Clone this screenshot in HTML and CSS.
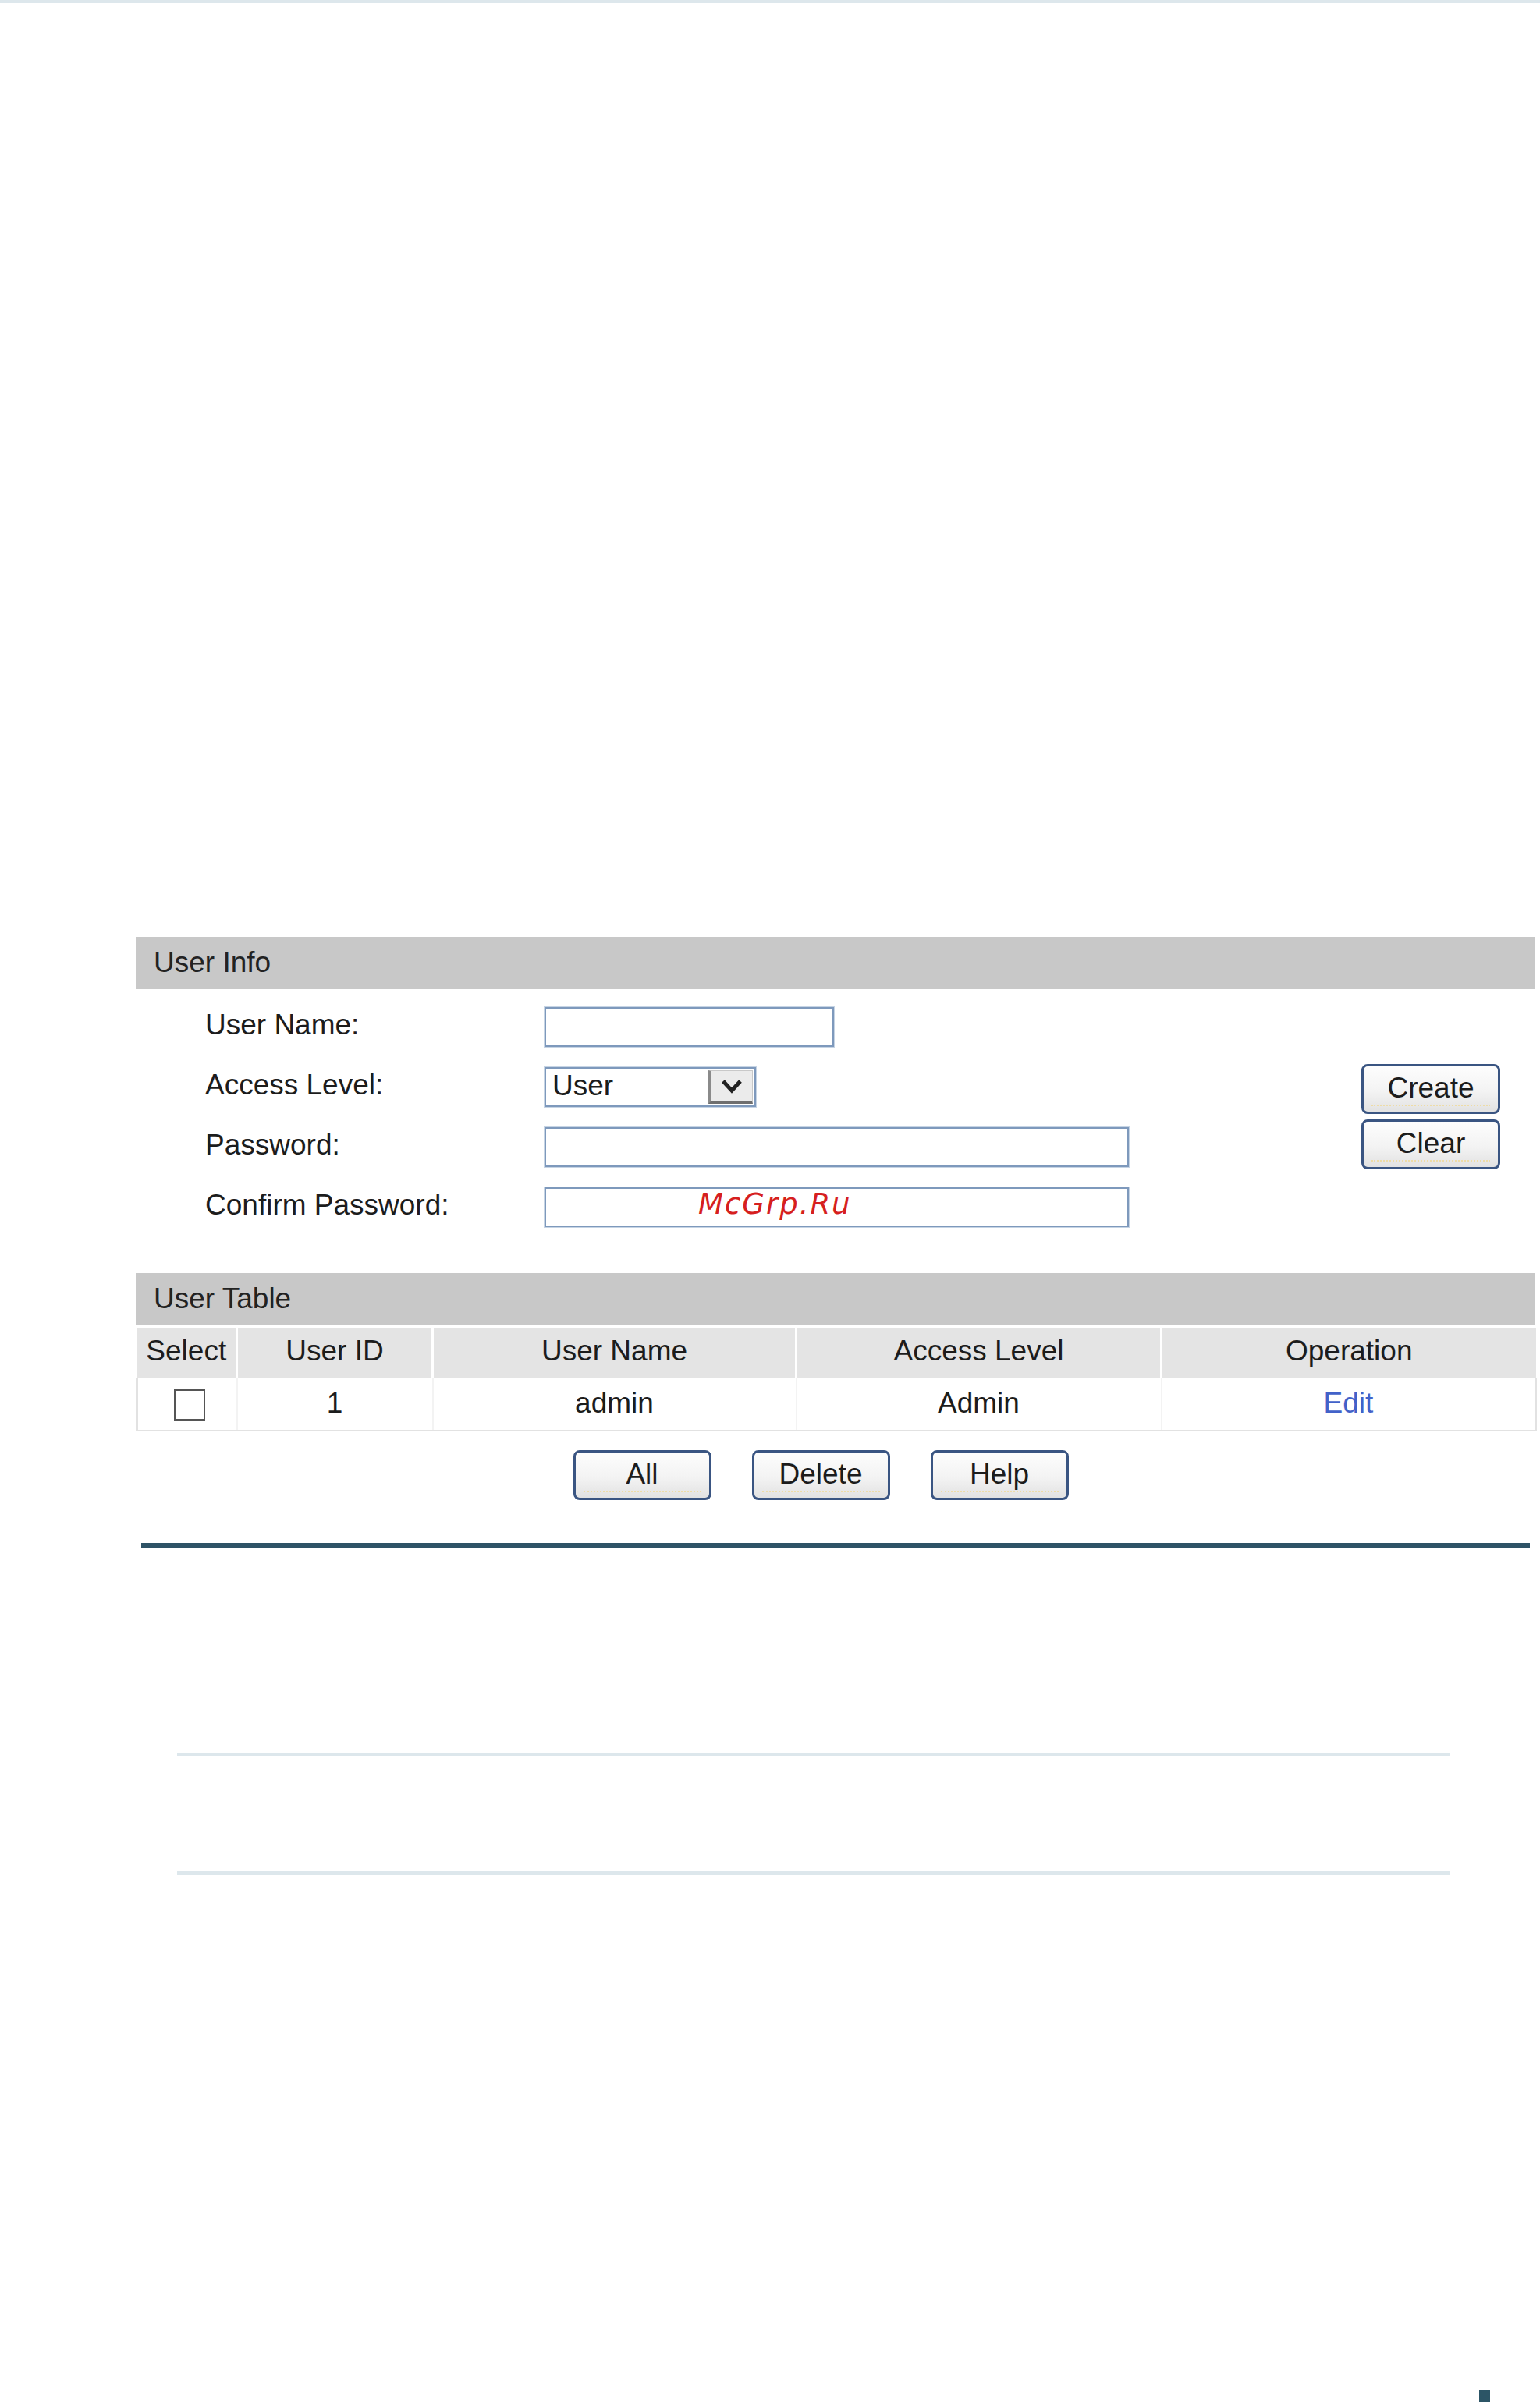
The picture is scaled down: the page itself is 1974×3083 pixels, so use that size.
FILE: index.html
```html
<!DOCTYPE html>
<html lang="en">
<head>
  <meta charset="UTF-8" />
  <meta name="viewport" content="width=device-width, initial-scale=1.0"/>
  <title>User Config</title>
  <link rel="stylesheet" href="styles.css">
</head>
<body>

  <div class="top-rule"></div>

  <div class="page">

    <div class="panel">
      <div class="panel-title">User Info</div>
      <div class="info-body">
        <div class="fields">
          <label>User Name:</label>
          <input type="text" class="field short">

          <label>Access Level:</label>
          <div class="select">
            <span>User</span>
            <div class="select-arrow">
              <svg width="28" height="20" viewBox="0 0 28 20"><polyline points="3,3 14,15 25,3" fill="none" stroke="#222" stroke-width="5" stroke-linejoin="miter"/></svg>
            </div>
          </div>

          <label>Password:</label>
          <input type="password" class="field long">

          <label>Confirm Password:</label>
          <div class="field-wrap">
            <input type="password" class="field long">
            <span class="watermark">McGrp.Ru</span>
          </div>
        </div>

        <div class="side-buttons">
          <button class="btn">Create</button>
          <button class="btn">Clear</button>
        </div>
      </div>

      <div class="panel-title">User Table</div>
      <table class="user-table">
        <colgroup>
          <col style="width: 128px">
          <col style="width: 251px">
          <col style="width: 466px">
          <col style="width: 468px">
          <col style="width: 480px">
        </colgroup>
        <thead>
          <tr>
            <th>Select</th>
            <th>User ID</th>
            <th>User Name</th>
            <th>Access Level</th>
            <th>Operation</th>
          </tr>
        </thead>
        <tbody>
          <tr>
            <td><span class="checkbox"></span></td>
            <td>1</td>
            <td>admin</td>
            <td>Admin</td>
            <td><a href="#">Edit</a></td>
          </tr>
        </tbody>
      </table>

      <div class="table-buttons">
        <button class="btn">All</button>
        <button class="btn">Delete</button>
        <button class="btn">Help</button>
      </div>

      <div class="dark-rule"></div>
    </div>

    <div class="thin-rule first"></div>
    <div class="thin-rule second"></div>

    <div class="corner-mark"></div>
  </div>

</body>
</html>
```

FILE: styles.css
```css
body {
  margin: 0;
  padding: 0;
  background: #fff;
  font-family: 'Liberation Sans', Arial, sans-serif;
  color: #1c1c1c;
}

.top-rule {
  height: 4px;
  background: #dde7ec;
}

.page {
  padding-top: 1197px;
  padding-bottom: 4px;
}

.panel {
  width: 1793px;
  margin-left: 174px;
}

.panel-title {
  height: 67px;
  line-height: 65px;
  padding-left: 23px;
  background: #c8c8c8;
  font-size: 37px;
  color: #222;
}

/* user info form */

.info-body {
  display: flex;
  justify-content: space-between;
  padding: 23px 44px 59px 89px;
}

.fields {
  display: grid;
  grid-template-columns: 435px auto;
  grid-auto-rows: 51px;
  row-gap: 26px;
  align-items: center;
}

.fields label {
  font-size: 37px;
  margin-bottom: 6px;
}

.field {
  box-sizing: border-box;
  height: 51px;
  margin: 0;
  border: 2px solid #7e99bc;
  box-shadow: 0 0 0 1px #c6d4e4;
  background: #fff;
  font-size: 34px;
  font-family: inherit;
}

.field.short {
  width: 371px;
}

.field.long {
  width: 749px;
}

.field-wrap {
  position: relative;
  width: 749px;
  height: 51px;
}

.watermark {
  position: absolute;
  left: 197px;
  top: 0;
  font-family: 'DejaVu Sans', sans-serif;
  font-style: italic;
  font-size: 37px;
  letter-spacing: 2px;
  color: #d61f1f;
}

.select {
  box-sizing: border-box;
  width: 271px;
  height: 51px;
  display: flex;
  align-items: center;
  justify-content: space-between;
  padding: 2px 2px 2px 8px;
  border: 2px solid #7e99bc;
  box-shadow: 0 0 0 1px #c6d4e4;
  font-size: 37px;
}

.select span {
  margin-bottom: 4px;
}

.select-arrow {
  box-sizing: border-box;
  width: 57px;
  height: 43px;
  display: flex;
  align-items: center;
  justify-content: center;
  background: #ebebeb;
  border-left: 3px solid #8a8a8a;
  border-bottom: 3px solid #6f6f6f;
  border-top: 1px solid #c8c8c8;
  border-right: 1px solid #c8c8c8;
}

.side-buttons {
  display: flex;
  flex-direction: column;
  gap: 7px;
  margin-top: 73px;
}

/* buttons */

.btn {
  position: relative;
  box-sizing: border-box;
  width: 178px;
  height: 64px;
  padding: 0 0 3px;
  border: 3px solid #3a5582;
  border-radius: 8px;
  background: linear-gradient(to bottom, #fdfdfd 0%, #f3f3f3 55%, #e2e2e2 100%);
  font-family: inherit;
  font-size: 37px;
  color: #1c1c1c;
  cursor: pointer;
}

.btn::after {
  content: "";
  position: absolute;
  left: 10px;
  right: 10px;
  bottom: 7px;
  border-bottom: 2px dotted #eedca6;
}

/* user table */

.user-table {
  width: 1793px;
  margin-top: 3px;
  border-collapse: collapse;
  table-layout: fixed;
  font-size: 37px;
}

.user-table th {
  height: 60px;
  padding: 0 0 5px;
  background: #e4e4e4;
  font-weight: normal;
  border-left: 3px solid #fff;
}

.user-table th:first-child {
  border-left: none;
}

.user-table td {
  height: 64px;
  padding: 0 0 2px;
  text-align: center;
  border-bottom: 2px solid #e2e2e2;
  border-left: 2px solid #f3f3f3;
}

.user-table td:first-child {
  border-left: 3px solid #e2e2e2;
}

.user-table td:last-child {
  border-right: 2px solid #e2e2e2;
}

.user-table a {
  color: #4262c9;
  text-decoration: none;
}

.checkbox {
  display: inline-block;
  box-sizing: border-box;
  width: 40px;
  height: 40px;
  margin-left: 6px;
  vertical-align: middle;
  border: 2px solid #555;
  background: #fff;
}

.table-buttons {
  display: flex;
  justify-content: center;
  gap: 52px;
  margin-top: 24px;
  padding-right: 37px;
}

.table-buttons .btn {
  width: 177px;
}

.dark-rule {
  height: 7px;
  margin: 55px 6px 0 7px;
  background: #2e5366;
}

/* page rules */

.thin-rule {
  width: 1631px;
  height: 4px;
  margin-left: 227px;
  background: #dde7ec;
}

.thin-rule.first {
  margin-top: 262px;
}

.thin-rule.second {
  margin-top: 148px;
}

.corner-mark {
  width: 14px;
  height: 15px;
  margin: 661px 0 0 1896px;
  background: #2c5566;
}
```
